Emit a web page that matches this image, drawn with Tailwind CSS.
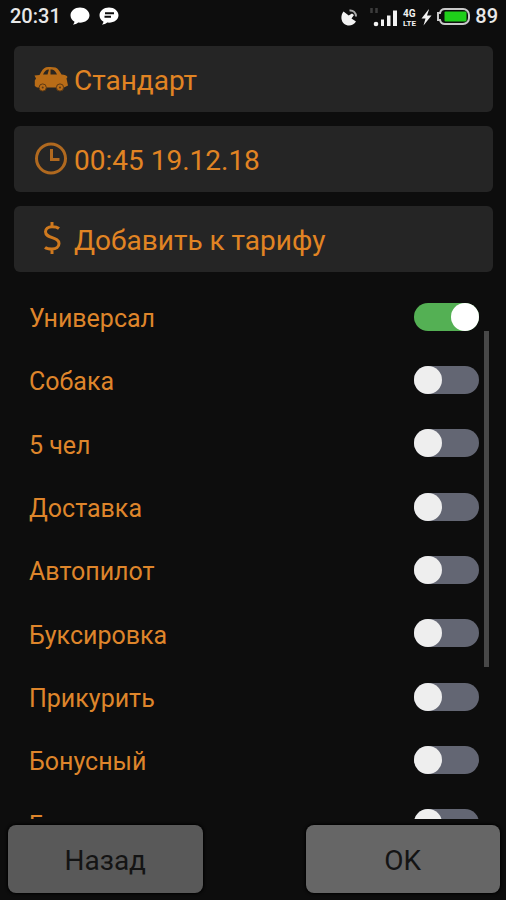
<!DOCTYPE html>
<html lang="ru">
<head>
<meta charset="utf-8">
<meta name="viewport" content="width=device-width, initial-scale=1">
<title>Параметры заказа</title>
<script src="https://cdn.jsdelivr.net/npm/@tailwindcss/browser@4"></script>
</head>
<body class="bg-[#0d0d0d] font-['Roboto','Noto_Sans',sans-serif]">
<div class="flex h-screen flex-col overflow-hidden">
  <header class="flex h-8 shrink-0 items-center justify-between pr-2 pl-[10px] text-xl font-medium text-[#e8e8e8]">
    <div class="flex items-center gap-[9px]">
      <span>20:31</span>
      <svg class="h-5 w-5" viewBox="0 0 20 20" fill="#fff" aria-hidden="true"><path d="M10 1.500C4.800 1.500.5 4.900.5 9.300c0 2.800 1.500 5.100 4 6.400-.2 1.200-.7 2.100-1.500 3 2.200-.2 4-1 5.200-2.100 6.300.7 11.300-2.500 11.300-7.300 0-4.400-4.300-7.800-9.500-7.800z"/></svg>
      <svg class="h-5 w-5" viewBox="0 0 20 20" fill="#fff" aria-hidden="true"><path d="M10 1.500C4.800 1.500.5 4.900.5 9.300c0 2.800 1.500 5.100 4 6.400-.2 1.200-.7 2.100-1.500 3 2.200-.2 4-1 5.200-2.100 6.300.7 11.300-2.500 11.300-7.300 0-4.400-4.300-7.800-9.500-7.800z"/><path d="M6 7.200h9M5.500 10.800h6.500" stroke="#0d0d0d" stroke-width="2"/></svg>
    </div>
    <div class="flex items-center">
      <svg class="h-6 w-[106px]" viewBox="0 0 106 24" fill="#f2f2f2" aria-hidden="true">
        <path d="M12.500 7.500C9.500 11 9.800 17 13 19.700c3.500 2.900 9.300 2.300 12-2.200L20.500 14.500l2.500-3.500-2-1.500-3.300 2z"/>
        <path d="M18.500 6.500c3.700-.5 6.600 2.200 6.500 6" fill="none" stroke="#aaa" stroke-width="2"/>
        <path d="M40.500 4v5M45.500 4v5" stroke="#3c3c3c" stroke-width="2.500"/>
        <circle cx="45" cy="20" r="2.300"/>
        <path d="M50 16.500h3V23h-3zM56 12.500h3.500V23H56zM62 7.500h4V23h-4z" transform="translate(0 -1)"/>
        <text x="72" y="13" font-size="10" font-weight="700">4G</text>
        <text x="72" y="21.500" font-size="8" font-weight="700">LTE</text>
        <path d="M97.500 5.500l-7 9h4l-2 7 8-10h-4.500l2-6z"/>
      </svg>
      <svg class="h-6 w-[34px]" viewBox="0 0 34 24" aria-hidden="true">
        <path d="M8 5h18a6 6 0 0 1 6 6v3a6 6 0 0 1-6 6H8a5 5 0 0 1-5-4H1V9h2a5 5 0 0 1 5-4z" fill="#0d0d0d" stroke="#c9c9c9" stroke-width="2"/>
        <rect x="7.500" y="7.500" width="22" height="10" rx="1" fill="#1fce1a"/>
      </svg>
      <span class="pl-1">89</span>
    </div>
  </header>

  <div class="flex shrink-0 flex-col gap-[14px] pt-[14px] pr-[13px] pl-[14px] text-[28px] leading-8 text-[#e18423]">
    <button type="button" class="flex h-[66px] items-center gap-[6px] rounded-md bg-[#252525] pl-5 text-left">
      <svg class="h-9 w-[34px] shrink-0" viewBox="0 0 34 36" aria-hidden="true">
        <path fill="#b86c17" d="M0.500 14.500L5.500 14C7.500 10 9.500 7 12 6.300c3-.6 7-.6 9.500.3C24 7.600 25.800 10.500 27.500 13.500c3 .3 5.500 1 6 2.500l-1 1.500L34 24.500l-4 2H3L.8 25V19.500L2 17.500z"/>
        <path fill="#2b2620" d="M9 13.500h4.500L15 8.500c-3 0-4.200 1.500-6 5zM16.500 8.500v5H23c-1-2-2-4-3.500-4.600-.8-.4-2-.4-3-.4z"/>
        <circle cx="8.700" cy="26.500" r="3.600" fill="#b86c17" stroke="#5c3915"/><circle cx="26" cy="26.500" r="3.600" fill="#b86c17" stroke="#5c3915"/>
        <circle cx="8.700" cy="26.500" r="1" fill="#5c3915"/><circle cx="26" cy="26.500" r="1" fill="#5c3915"/>
      </svg>
      <span class="pt-1">Стандарт</span>
    </button>
    <button type="button" class="flex h-[66px] items-center gap-[6px] rounded-md bg-[#252525] pl-5 text-left">
      <svg class="h-9 w-[34px] shrink-0" viewBox="0 0 34 36" fill="none" stroke="#b0691f" stroke-width="3" aria-hidden="true"><circle cx="17" cy="17.500" r="14.500"/><path d="M17.500 8v10.500h8"/></svg>
      <span class="pt-1">00:45 19.12.18</span>
    </button>
    <button type="button" class="flex h-[66px] items-center gap-[6px] rounded-md bg-[#252525] pl-5 text-left">
      <svg class="h-9 w-[34px] shrink-0" viewBox="0 0 34 36" fill="none" stroke="#cf791e" stroke-width="3" aria-hidden="true"><path d="M18 1v5M18 28v5M25 7.500C23 5.900 20.500 5.700 18 5.700c-4 0-6.500 2-6.500 5.100 0 7.200 13.500 4.500 13.500 11.700 0 3.500-3 5.600-7 5.600-3 0-5.600-.6-7-1.800"/></svg>
      <span class="pt-1">Добавить к тарифу</span>
    </button>
  </div>

  <main class="relative mt-[13px] min-h-0 flex-1 overflow-hidden text-[25px] leading-8 text-[#de852b]">
    <div class="grid min-h-[570px] auto-rows-fr pr-[27px] pl-[29px]">
      <label class="flex items-center justify-between"><span class="pt-[5px]">Универсал</span><input type="checkbox" checked class="h-7 w-[65px] appearance-none rounded-full bg-[#636673] before:block before:size-7 before:rounded-full before:bg-[#eee] checked:bg-[#54b054] checked:before:ml-auto checked:before:bg-white"></label>
      <label class="flex items-center justify-between"><span class="pt-[5px]">Собака</span><input type="checkbox" class="h-7 w-[65px] appearance-none rounded-full bg-[#636673] before:block before:size-7 before:rounded-full before:bg-[#eee] checked:bg-[#54b054] checked:before:ml-auto checked:before:bg-white"></label>
      <label class="flex items-center justify-between"><span class="pt-[5px]">5 чел</span><input type="checkbox" class="h-7 w-[65px] appearance-none rounded-full bg-[#636673] before:block before:size-7 before:rounded-full before:bg-[#eee] checked:bg-[#54b054] checked:before:ml-auto checked:before:bg-white"></label>
      <label class="flex items-center justify-between"><span class="pt-[5px]">Доставка</span><input type="checkbox" class="h-7 w-[65px] appearance-none rounded-full bg-[#636673] before:block before:size-7 before:rounded-full before:bg-[#eee] checked:bg-[#54b054] checked:before:ml-auto checked:before:bg-white"></label>
      <label class="flex items-center justify-between"><span class="pt-[5px]">Автопилот</span><input type="checkbox" class="h-7 w-[65px] appearance-none rounded-full bg-[#636673] before:block before:size-7 before:rounded-full before:bg-[#eee] checked:bg-[#54b054] checked:before:ml-auto checked:before:bg-white"></label>
      <label class="flex items-center justify-between"><span class="pt-[5px]">Буксировка</span><input type="checkbox" class="h-7 w-[65px] appearance-none rounded-full bg-[#636673] before:block before:size-7 before:rounded-full before:bg-[#eee] checked:bg-[#54b054] checked:before:ml-auto checked:before:bg-white"></label>
      <label class="flex items-center justify-between"><span class="pt-[5px]">Прикурить</span><input type="checkbox" class="h-7 w-[65px] appearance-none rounded-full bg-[#636673] before:block before:size-7 before:rounded-full before:bg-[#eee] checked:bg-[#54b054] checked:before:ml-auto checked:before:bg-white"></label>
      <label class="flex items-center justify-between"><span class="pt-[5px]">Бонусный</span><input type="checkbox" class="h-7 w-[65px] appearance-none rounded-full bg-[#636673] before:block before:size-7 before:rounded-full before:bg-[#eee] checked:bg-[#54b054] checked:before:ml-auto checked:before:bg-white"></label>
      <label class="flex items-center justify-between"><span class="pt-[5px]">Б</span><input type="checkbox" class="h-7 w-[65px] appearance-none rounded-full bg-[#636673] before:block before:size-7 before:rounded-full before:bg-[#eee] checked:bg-[#54b054] checked:before:ml-auto checked:before:bg-white"></label>
    </div>
    <div class="absolute top-[46px] right-[17px] h-[336px] w-[5px] bg-[#484848]"></div>
  </main>

  <footer class="flex shrink-0 justify-between gap-[103px] pt-[6px] pr-[6px] pb-[7px] pl-2 text-[28px] text-[#141414]">
    <button type="button" class="h-[68px] flex-1 rounded-lg bg-[#595959] pt-1 shadow-[0_0_3px_1px_#000]">Назад</button>
    <button type="button" class="h-[68px] flex-1 rounded-lg bg-[#666] pt-1 shadow-[0_0_3px_1px_#000]">OK</button>
  </footer>
</div>
</body>
</html>
